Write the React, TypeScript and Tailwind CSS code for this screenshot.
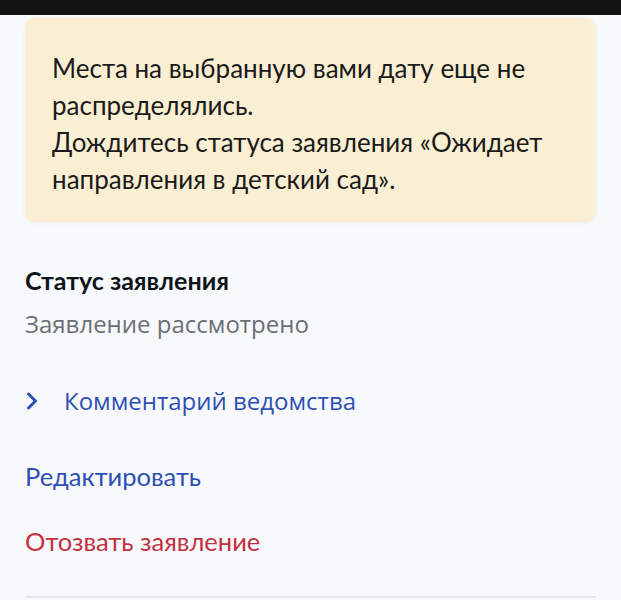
export default function App() {
  return (
    <div
      className="w-[621px] h-[600px] overflow-hidden bg-[#f8f9fc]"
      style={{ fontFamily: "Lato, 'Open Sans', sans-serif" }}
    >
      <div className="h-[15px] bg-[#141414]" />

      <div className="px-[25px]">
        <div className="mt-[3px] rounded-[10px] bg-[#fbefd3] px-[27px] pt-[32px] pb-[24px] shadow-[0_1px_4px_rgba(0,0,0,0.05)]">
          <p className="text-[26px] leading-[37px] text-[#1a1a1a]">
            Места на выбранную вами дату еще не распределялись.
            <br />
            Дождитесь статуса заявления «Ожидает направления в детский сад».
          </p>
        </div>

        <div className="mt-[43px]">
          <h2 className="text-[25px] leading-[30px] font-bold text-[#0f1419]">
            Статус заявления
          </h2>
          <p
            className="mt-[14px] text-[24px] leading-[30px] text-[#6b6f75]"
            style={{ fontFamily: "'Open Sans', sans-serif" }}
          >
            Заявление рассмотрено
          </p>
        </div>

        <button className="mt-[47px] flex items-center text-[#2e4fb4]">
          <svg width="12" height="18" viewBox="0 0 12 18" fill="none" className="ml-[1px]">
            <path
              d="M2.5 2 L9.5 9 L2.5 16"
              stroke="currentColor"
              strokeWidth="3"
              strokeLinecap="round"
              strokeLinejoin="round"
            />
          </svg>
          <span
            className="ml-[26px] text-[24px] leading-[30px]"
            style={{ fontFamily: "'Open Sans', sans-serif" }}
          >
            Комментарий ведомства
          </span>
        </button>

        <div className="mt-[45px] text-[25.5px] leading-[30px] text-[#2e4fb4]">
          Редактировать
        </div>

        <div className="mt-[35px] text-[25.5px] leading-[30px] text-[#c3303f]">
          Отозвать заявление
        </div>

        <div className="mt-[40px] h-[2px] bg-[#e3e5e9]" />
      </div>
    </div>
  );
}
